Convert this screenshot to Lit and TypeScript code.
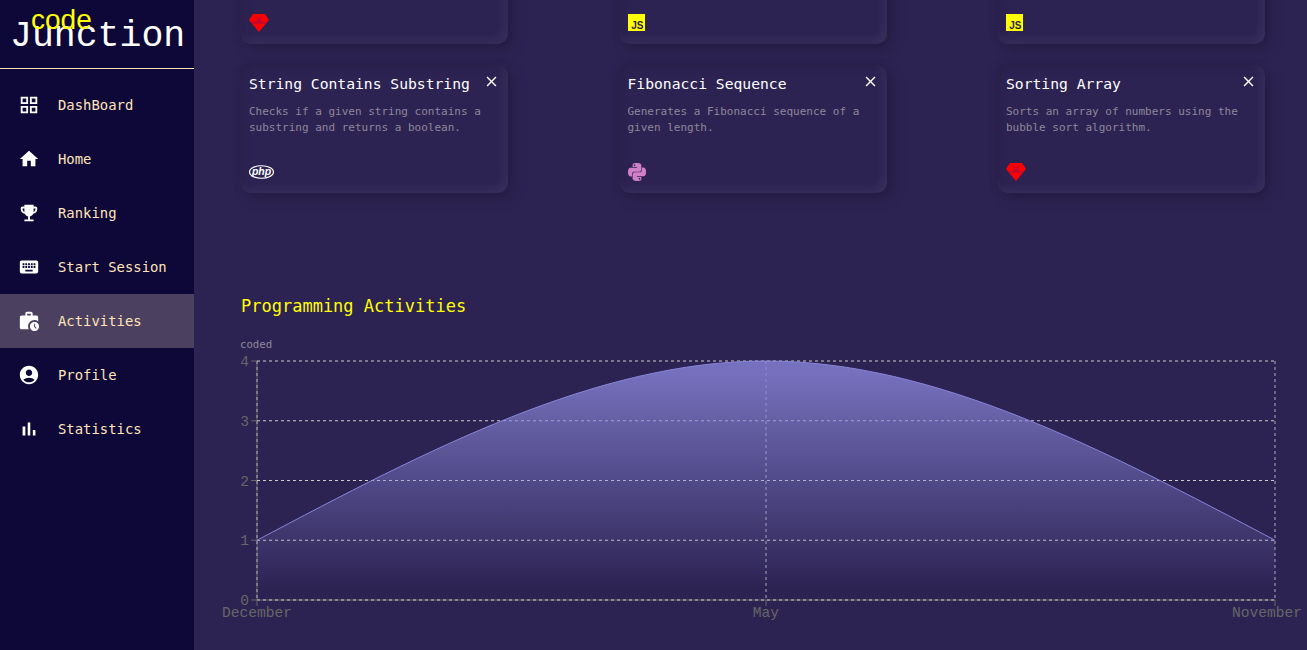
import { LitElement, css, html, svg } from "lit";
import { customElement } from "lit/decorators.js";

const navItems = [
  { label: "DashBoard", paths: ["M3 3v8h8V3H3zm6 6H5V5h4v4zm-6 4v8h8v-8H3zm6 6H5v-4h4v4zm4-16v8h8V3h-8zm6 6h-4V5h4v4zm-6 4v8h8v-8h-8zm6 6h-4v-4h4v4z"] },
  { label: "Home", paths: ["M10 20v-6h4v6h5v-8h3L12 3 2 12h3v8z"] },
  { label: "Ranking", paths: ["M19 5h-2V3H7v2H5c-1.1 0-2 .9-2 2v1c0 2.55 1.92 4.63 4.39 4.94.63 1.5 1.98 2.63 3.61 2.96V19H7v2h10v-2h-4v-3.1c1.63-.33 2.98-1.46 3.61-2.96C19.08 12.63 21 10.55 21 8V7c0-1.1-.9-2-2-2zM5 8V7h2v3.82C5.84 10.4 5 9.3 5 8zm14 0c0 1.3-.84 2.4-2 2.82V7h2v1z"] },
  { label: "Start Session", paths: ["M20 5H4c-1.1 0-1.99.9-1.99 2L2 17c0 1.1.9 2 2 2h16c1.1 0 2-.9 2-2V7c0-1.1-.9-2-2-2zm-9 3h2v2h-2V8zm0 3h2v2h-2v-2zM8 8h2v2H8V8zm0 3h2v2H8v-2zm-1 2H5v-2h2v2zm0-3H5V8h2v2zm9 7H8v-2h8v2zm0-4h-2v-2h2v2zm0-3h-2V8h2v2zm3 3h-2v-2h2v2zm0-3h-2V8h2v2z"] },
  { label: "Activities", active: true, paths: ["M18 11c1.49 0 2.87.47 4 1.26V8c0-1.11-.89-2-2-2h-4V4c0-1.11-.89-2-2-2h-4c-1.11 0-2 .89-2 2v2H4c-1.11 0-1.99.89-1.99 2L2 19c0 1.11.89 2 2 2h7.68c-.43-.91-.68-1.92-.68-3 0-3.87 3.13-7 7-7zm-8-7h4v2h-4V4z", "M18 13c-2.76 0-5 2.24-5 5s2.24 5 5 5 5-2.24 5-5-2.24-5-5-5zm1.65 7.35L17.5 18.2V15h1v2.79l1.85 1.85-.7.71z"] },
  { label: "Profile", paths: ["M12 2C6.48 2 2 6.48 2 12s4.48 10 10 10 10-4.48 10-10S17.52 2 12 2zm0 4c1.93 0 3.5 1.57 3.5 3.5S13.93 13 12 13s-3.5-1.57-3.5-3.5S10.07 6 12 6zm0 14c-2.03 0-4.43-.82-6.14-2.88C7.55 15.8 9.68 15 12 15s4.45.8 6.14 2.12C16.43 19.18 14.03 20 12 20z"] },
  { label: "Statistics", paths: ["M5 9.2h3V19H5zM10.6 5h2.8v14h-2.8zm5.6 8H19v6h-2.8z"] },
];

const pythonPath =
  "M14.25.18l.9.2.73.26.59.3.45.32.34.34.25.34.16.33.1.3.04.26.02.2-.01.13V8.5l-.05.63-.13.55-.21.46-.26.38-.3.31-.33.25-.35.19-.35.14-.33.1-.3.07-.26.04-.21.02H8.77l-.69.05-.59.14-.5.22-.41.27-.33.32-.27.35-.2.36-.15.37-.1.35-.07.32-.04.27-.02.21v3.06H3.17l-.21-.03-.28-.07-.32-.12-.35-.18-.36-.26-.36-.36-.35-.46-.32-.59-.28-.73-.21-.88-.14-1.05-.05-1.23.06-1.22.16-1.04.24-.87.32-.71.36-.57.4-.44.42-.33.42-.24.4-.16.36-.1.32-.05.24-.01h.16l.06.01h8.16v-.83H6.18l-.01-2.75-.02-.37.05-.34.11-.31.17-.28.25-.26.31-.23.38-.2.44-.18.51-.15.58-.12.64-.1.71-.06.77-.04.84-.02 1.27.05zm-6.3 1.98l-.23.33-.08.41.08.41.23.34.33.22.41.09.41-.09.33-.22.23-.34.08-.41-.08-.41-.23-.33-.33-.22-.41-.09-.41.09zm13.09 3.95l.28.06.32.12.35.18.36.27.36.35.35.47.32.59.28.73.21.88.14 1.04.05 1.23-.06 1.23-.16 1.04-.24.86-.32.71-.36.57-.4.45-.42.33-.42.24-.4.16-.36.09-.32.05-.24.02-.16-.01h-8.22v.82h5.84l.01 2.76.02.36-.05.34-.11.31-.17.29-.25.25-.31.24-.38.2-.44.17-.51.15-.58.13-.64.09-.71.07-.77.04-.84.01-1.27-.04-1.07-.14-.9-.2-.73-.25-.59-.3-.45-.33-.34-.34-.25-.34-.16-.33-.1-.3-.04-.25-.02-.2.01-.13v-5.34l.05-.64.13-.54.21-.46.26-.38.3-.32.33-.24.35-.2.35-.14.33-.1.3-.06.26-.04.21-.02.13-.01h5.84l.69-.05.59-.14.5-.21.41-.28.33-.32.27-.35.2-.36.15-.36.1-.35.07-.32.04-.28.02-.21V6.07h2.09l.14.01zm-6.47 14.25l-.23.33-.08.41.08.41.23.33.33.23.41.08.41-.08.33-.23.23-.33.08-.41-.08-.41-.23-.33-.33-.23-.41-.08-.41.08z";

const cards = [
  { title: "", text: "", lang: "ruby" },
  { title: "", text: "", lang: "js" },
  { title: "", text: "", lang: "js" },
  { title: "String Contains Substring", text: "Checks if a given string contains a substring and returns a boolean.", lang: "php" },
  { title: "Fibonacci Sequence", text: "Generates a Fibonacci sequence of a given length.", lang: "python" },
  { title: "Sorting Array", text: "Sorts an array of numbers using the bubble sort algorithm.", lang: "ruby" },
];

// chart coordinates, local to the svg (x - 194, y - 335)
const left = 63;
const mid = 572;
const right = 1081;
const gridY = [26, 85.75, 145.5, 205.25, 265];
const areaTop = `M${left} 205.25C232.7 115.5 402.3 26 ${mid} 26C741.7 26 911.3 115.5 ${right} 205.25`;

@customElement("app-root")
export class AppRoot extends LitElement {
  static styles = css`
    :host {
      display: flex;
      height: 650px;
      overflow: hidden;
      background: #2d2353;
      font-family: "DejaVu Sans Mono", monospace;
    }
    .sidebar {
      flex: 0 0 194px;
      background: #0e0838;
    }
    .brand {
      position: relative;
      height: 68px;
      border-bottom: 1px solid #ffe5b0;
      margin-bottom: 9px;
    }
    .brand-name {
      padding: 14px 0 0 10px;
      font-family: "Liberation Mono", monospace;
      font-size: 36.5px;
      line-height: 45px;
      color: #fff;
    }
    .brand-code {
      position: absolute;
      left: 31px;
      top: 4px;
      font-family: "Liberation Sans", sans-serif;
      font-size: 28px;
      line-height: 32px;
      color: #ff0;
    }
    .nav-item {
      display: flex;
      align-items: center;
      height: 54px;
      padding-left: 18px;
      gap: 18px;
      font-size: 13.9px;
      color: #ffe4b8;
    }
    .nav-item.active {
      background: #4c4061;
    }
    .nav-item svg {
      width: 22px;
      height: 22px;
      fill: #fff;
    }
    .main {
      flex: 1;
      min-width: 0;
    }
    .cards {
      display: grid;
      grid-template-columns: repeat(3, 268px);
      justify-content: space-between;
      row-gap: 21px;
      margin: -84px 42px 0 46px;
    }
    .card {
      position: relative;
      display: flex;
      flex-direction: column;
      height: 128px;
      box-sizing: border-box;
      padding: 10px 10px 12px 9px;
      border-radius: 10px;
      background: #2d2353;
      box-shadow: 6px 6px 14px rgba(0, 0, 0, 0.18), -2px -2px 8px rgba(0, 0, 0, 0.08),
        inset 3px 3px 8px rgba(0, 0, 0, 0.12), inset -4px -4px 10px rgba(255, 255, 255, 0.06);
    }
    .card h3 {
      margin: 0;
      height: 18px;
      font-size: 14.68px;
      line-height: 18px;
      font-weight: 400;
      color: #fff;
    }
    .card p {
      margin: 11px 0 0;
      flex: 1;
      font-size: 11px;
      line-height: 16px;
      color: #8d8799;
    }
    .close {
      position: absolute;
      top: 8px;
      right: 8px;
      width: 17px;
      height: 17px;
      fill: #fff;
    }
    .lang {
      display: block;
      height: 18px;
      overflow: visible;
    }
    .lang-label {
      font-family: "Liberation Sans", sans-serif;
    }
    .title {
      margin: 103px 0 0 47px;
      font-size: 17px;
      line-height: 20px;
      font-weight: 400;
      color: #ff0;
    }
    .chart {
      display: block;
      margin-top: 19px;
      width: 1113px;
      height: 315px;
    }
    .chart text {
      font-family: "Liberation Mono", monospace;
      font-size: 14.6px;
      fill: #666;
    }
    .chart .unit {
      font-family: "DejaVu Sans Mono", monospace;
      font-size: 10.7px;
      fill: #8d8799;
    }
  `;

  langIcon(lang: string) {
    if (lang === "js") {
      return html`<svg class="lang" width="17" height="18" viewBox="0 0 17 18">
        <rect width="17" height="17" fill="#ff0"></rect>
        <text class="lang-label" x="15.5" y="15" text-anchor="end" font-size="10" font-weight="700" fill="#2d2353">JS</text>
      </svg>`;
    }
    if (lang === "python") {
      return html`<svg class="lang" width="18" height="18" viewBox="0 0 24 24">
        <path d=${pythonPath} fill="#d17fc6"></path>
      </svg>`;
    }
    if (lang === "php") {
      return html`<svg class="lang" width="26" height="18" viewBox="0 0 26 18">
        <ellipse cx="12.5" cy="9" rx="12" ry="6.3" fill="none" stroke="#fff" stroke-width="1.1"></ellipse>
        <text class="lang-label" x="12.5" y="11.8" text-anchor="middle" font-size="10.5" font-style="italic" font-weight="700" fill="#fff">php</text>
      </svg>`;
    }
    return html`<svg class="lang" width="20" height="18" viewBox="0 0 20 18">
      <path d="M4 0H16L20 6 10 18 0 6Z" fill="#f00"></path>
      <path d="M7 2.5 10 6 13 2.5M3 9H17" fill="none" stroke="#a01040" stroke-width="1"></path>
      <path d="M8.5 5.5H11.5L14 8.5H6Z" fill="#c00830"></path>
    </svg>`;
  }

  renderChart() {
    return html`<svg class="chart" viewBox="0 0 1113 315">
      <defs>
        <linearGradient id="fill" x1="0" y1="0" x2="0" y2="1">
          <stop offset="5%" stop-color="#8884d8" stop-opacity="0.8"></stop>
          <stop offset="95%" stop-color="#8884d8" stop-opacity="0"></stop>
        </linearGradient>
      </defs>
      <text class="unit" x="46" y="13">coded</text>
      <line x1=${left} x2=${right} y1="265" y2="265" stroke="#666"></line>
      <line x1=${left} x2=${left} y1="26" y2="265" stroke="#666"></line>
      ${gridY.map(
        (y) => svg`<line x1=${left} x2=${right} y1=${y} y2=${y} stroke="#ccc" stroke-dasharray="3 3"></line>`
      )}
      ${[left, mid, right].map(
        (x) => svg`<line x1=${x} x2=${x} y1="26" y2="265" stroke="#ccc" stroke-dasharray="3 3" stroke-opacity="0.8"></line>`
      )}
      <path d=${`${areaTop}L${right} 265L${left} 265Z`} fill="url(#fill)"></path>
      <path d=${areaTop} fill="none" stroke="#8884d8" stroke-width="1"></path>
      ${gridY.map(
        (y, i) => svg`
          <line x1="57" x2=${left} y1=${y} y2=${y} stroke="#666"></line>
          <text x="55" y=${y + 5} text-anchor="end">${4 - i}</text>`
      )}
      ${[
        [left, left, "December"],
        [mid, mid, "May"],
        [right, 1073, "November"],
      ].map(
        ([x, labelX, label]) => svg`
          <line x1=${x} x2=${x} y1="265" y2="271" stroke="#666"></line>
          <text x=${labelX} y="282" text-anchor="middle">${label}</text>`
      )}
    </svg>`;
  }

  render() {
    return html`
      <aside class="sidebar">
        <div class="brand">
          <div class="brand-name">Junction</div>
          <div class="brand-code">code</div>
        </div>
        ${navItems.map(
          (item) => html`<div class="nav-item ${item.active ? "active" : ""}">
            <svg viewBox="0 0 24 24">${item.paths.map((d) => svg`<path d=${d}></path>`)}</svg>
            <span>${item.label}</span>
          </div>`
        )}
      </aside>
      <main class="main">
        <div class="cards">
          ${cards.map(
            (card) => html`<article class="card">
              <h3>${card.title}</h3>
              <p>${card.text}</p>
              <svg class="close" viewBox="0 0 24 24">
                <path d="M19 6.41 17.59 5 12 10.59 6.41 5 5 6.41 10.59 12 5 17.59 6.41 19 12 13.41 17.59 19 19 17.59 13.41 12z"></path>
              </svg>
              ${this.langIcon(card.lang)}
            </article>`
          )}
        </div>
        <h2 class="title">Programming Activities</h2>
        ${this.renderChart()}
      </main>
    `;
  }
}
